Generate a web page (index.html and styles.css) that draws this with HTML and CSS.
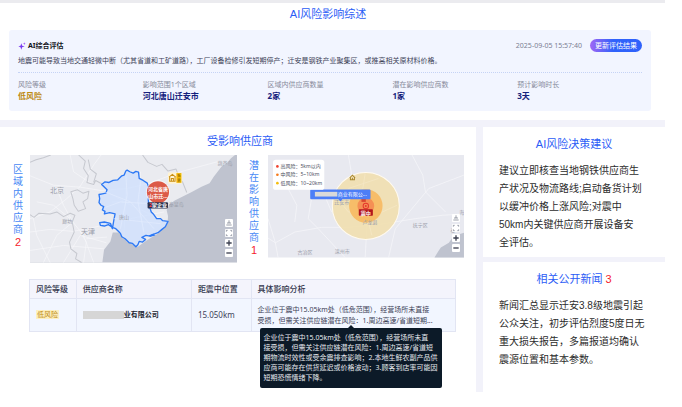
FILE: index.html
```html
<!DOCTYPE html>
<html lang="zh-CN">
<head>
	<meta charset="UTF-8">
	<title>AI风险影响综述</title>
	<link rel="stylesheet" href="styles.css">
</head>
<body>
	<div class="page">
		<section class="card overview">
			<h2 class="title">AI风险影响综述</h2>
			<div class="panel">
				<div class="panel-head">
					<svg class="spark" viewBox="0 0 24 24"><path d="M10 4 L12.5 11 L20 13 L12.5 15.500 L10 23 L7.500 15.500 L1 13 L7.500 11 Z" fill="#7a3cf0"/><path d="M19 1 L20.200 4 L23 5 L20.200 6.200 L19 9 L17.800 6.200 L15 5 L17.800 4 Z" fill="#a45cf5"/></svg>
					<h3>AI综合评估</h3>
					<span class="time">2025-09-05 15:57:40</span>
					<button type="button" class="refresh">更新评估结果</button>
				</div>
				<p class="desc">地震可能导致当地交通轻微中断（尤其省道和工矿道路），工厂设备检修引发短期停产；迁安是钢铁产业聚集区，或推高相关原材料价格。</p>
				<dl class="metrics">
					<div><dt>风险等级</dt><dd class="low">低风险</dd></div>
					<div><dt>影响范围1个区域</dt><dd>河北唐山迁安市</dd></div>
					<div><dt>区域内供应商数量</dt><dd>2家</dd></div>
					<div><dt>潜在影响供应商数</dt><dd>1家</dd></div>
					<div><dt>预计影响时长</dt><dd>3天</dd></div>
				</dl>
			</div>
		</section>

		<div class="columns">
			<section class="card suppliers">
				<h2 class="title">受影响供应商</h2>
				<div class="maps">
					<div class="side-label inner">区域内供应商<b>2</b></div>
					<!-- 区域地图 -->
					<div class="map map-area">
						<svg viewBox="0 0 618 321">
							<rect width="618" height="321" fill="#bfc3cf"/>
							<path d="M0 0H612L600 10L590 22L572 34L560 50L549 64L536 84L512 95L480 112L456 124L432 136L416 148L408 165L412 182L411 202L382 234L350 254L322 274L290 260L266 231L247 231L240 258L221 283L216 321H0Z" fill="#eaebf0"/>
							<g fill="none" stroke="#f8f8fb" stroke-width="2">
								<path d="M0 62L70 90L150 96L212 106L290 100L350 86L450 50L560 20"/>
								<path d="M0 190L60 170L110 130L148 96L190 30L212 0"/>
								<path d="M80 100L100 150L128 200L160 240L190 321M128 200L80 240L40 321"/>
								<path d="M0 230L60 222L128 228L200 214L245 200L300 190L400 170"/>
								<path d="M150 228L168 260L160 321M168 250L230 245M100 321L150 240L228 262M20 140L70 150L120 190M290 60L286 120L280 250M330 50L325 130L340 240M245 140L380 145M230 110L300 150L390 190"/>
								<path d="M0 285L100 270L220 280M60 321L20 240L8 180M120 0L130 50L190 90"/>
							</g>
							<g fill="none" stroke="#c6c8cf" stroke-width="3" stroke-linejoin="round">
								<path d="M0 22L18 14L40 8L62 0M145 0L165 18L160 40L174 62L170 82L190 88L196 76L218 88M174 14L180 42L198 56L190 82M0 178L12 186L26 174L60 176L80 170L100 184L120 174L134 180L126 200L132 230L118 260L122 280L140 294L136 310L154 321"/>
								<path d="M122 110L142 104L158 114L176 108L172 130L158 140L166 160L144 168L132 150L128 130ZM336 0L352 22L378 34L394 28L412 48L436 42L444 64L456 82L468 112"/>
							</g>
							<path d="M214 88L224 80L236 82L248 76L262 74L274 62L281 60L286 48L290 45L298 50L308 54L316 49L324 51L326 70L338 76L350 84L358 108L353 132L354 146L358 158L362 170L368 176L378 190L390 190L396 196L412 198L404 214L394 222L382 232L370 236L358 242L346 240L334 246L345 252L336 260L326 258L322 268L316 274L306 264L296 262L284 250L274 244L270 234L266 230L256 220L246 216L234 208L222 212L210 210L208 202L222 200L240 204L246 220L250 196L254 176L238 172L222 176L224 168L216 164L220 154L212 150L206 142L208 130L206 118L216 116L226 114L230 104L224 98Z" fill="#cfe0fc" fill-opacity=".8" stroke="#2d79f5" stroke-width="4" stroke-linejoin="round"/>
							<g fill="none" stroke="#e3ecfd" stroke-width="2"><path d="M226 156L270 140L350 145M286 60L290 120L270 220M330 80L322 140L340 230M250 190L390 205M224 110L300 140L370 220"/></g>
							<path d="M354 240L368 234L374 240L360 244Z" fill="#2d79f5"/>
							<g class="place">
								<text x="60" y="112">北京</text>
								<text x="152" y="235">天津</text>
								<text x="96" y="204" class="small">廊坊</text>
								<text x="266" y="191" class="small">唐山</text>
								<text x="414" y="153" class="small">秦皇岛</text>
								<text x="560" y="30" class="small">葫芦岛</text>
							</g>
							<rect x="412" y="52" width="42" height="34" rx="4" fill="#fff3d1"/>
							<path d="M415 66L425 58L435 66M417 66V78H433V66M422 78V70H428V78" fill="none" stroke="#c98d12" stroke-width="3"/>
							<rect x="437" y="54" width="15" height="29" fill="#f2b705"/>
							<text x="440" y="65" class="tiny-dark">低</text><text x="440" y="80" class="tiny-dark">震</text>
							<circle cx="382" cy="111" r="36" fill="#fff" fill-opacity=".5"/>
							<circle cx="382" cy="111" r="33" fill="#dc5a47"/>
							<text x="382" y="106" class="pin">河北省唐</text>
							<text x="382" y="128" class="pin">山市迁...</text>
							<rect x="351" y="141" width="61" height="19" rx="3" fill="#2b3350"/>
							<text x="382" y="156" class="pin"><tspan fill="#ff4b4b">2</tspan>家企业</text>
						</svg>
						<div class="controls">
							<button type="button" aria-label="定位"><svg viewBox="0 0 12 12"><path d="M6 2V6M3 6H9M2 9H10"/></svg></button>
							<button type="button" aria-label="全屏"><svg viewBox="0 0 12 12"><path d="M2 4V2H4M8 2H10V4M10 8V10H8M4 10H2V8"/></svg></button>
							<button type="button" aria-label="放大"><svg viewBox="0 0 12 12"><path class="bold" d="M6 2V10M2 6H10"/></svg></button>
							<button type="button" aria-label="缩小"><svg viewBox="0 0 12 12"><path class="bold" d="M2 6H10"/></svg></button>
						</div>
					</div>
					<div class="side-label">潜在影响供应商<b>1</b></div>
					<!-- 震中地图 -->
					<div class="map map-center">
						<svg viewBox="0 0 585 306">
							<rect width="585" height="306" fill="#e8e9f0"/>
							<path d="M497 306L508 288L516 276L540 262L554 242L585 232V306Z" fill="#bfc3cf"/>
							<g fill="none" stroke="#f7f7fa" stroke-width="2">
								<path d="M0 248L22 262L80 230L160 216L240 216L340 206L440 190L520 180L585 176"/>
								<path d="M22 262L30 306M0 190L22 262M430 0L462 60L470 110L530 170M240 0L250 60L300 130L290 306M360 306L380 220L480 100L585 60"/>
								<path d="M60 100L86 150L80 200M130 130L120 190L150 220L230 306M160 100L190 170"/>
							</g>
							<circle cx="292" cy="152" r="100" fill="#f1dfaf" fill-opacity=".9" stroke="#fffaf0" stroke-width="3"/>
							<path d="M208 130L240 170L320 180L385 150M290 55L280 120L310 240M240 100L330 70" fill="none" stroke="#f6e9c8" stroke-width="2"/>
							<circle cx="292" cy="152" r="50" fill="#f7bd69"/>
							<circle cx="292" cy="152" r="25" fill="#f58f54"/>
							<g class="place">
								<text x="198" y="147" class="small">迁安市</text>
								<text x="282" y="207" class="small">卢龙县</text>
								<text x="432" y="215" class="small">抚宁区</text>
								<text x="88" y="296" class="small">古冶区</text>
								<text x="199" y="293" class="small">滦州市</text>
								<text x="545" y="229" class="small">秦</text>
								<text x="571" y="177" class="small">海</text>
							</g>
							<path d="M244 68L252 60L260 68M246 68V74H258V68M252 74V68" fill="none" stroke="#a9872c" stroke-width="3"/>
							<rect x="279" y="130" width="13" height="10" fill="#d9482f"/>
							<circle cx="292" cy="152" r="8" fill="none" stroke="#e5372d" stroke-width="3"/>
							<circle cx="292" cy="152" r="3" fill="#e5372d"/>
							<rect x="271" y="162" width="42" height="19" rx="2" fill="#b3161d"/>
							<text x="292" y="178" class="pin">震中</text>
							<path d="M129 103H303Q306 103 306 106V129Q306 132 303 132H222L216 139L210 132H129Q126 132 126 129V106Q126 103 129 103Z" fill="#4c7ef7"/>
							<rect x="140" y="110" width="67" height="14" fill="#d9d9d9"/>
							<text x="208" y="123" class="tag">商业有限公...</text>
							<rect x="15" y="14" width="153" height="90" rx="8" fill="#fff"/>
							<circle cx="28" cy="34" r="4" fill="#f0422f"/>
							<circle cx="28" cy="59" r="4" fill="#f77a1b"/>
							<circle cx="28" cy="84" r="4" fill="#f5bd0c"/>
							<g class="legend">
								<text x="37" y="39">高风险：</text><text x="97" y="39">5km以内</text>
								<text x="37" y="64">中风险：</text><text x="97" y="64">5~10km</text>
								<text x="37" y="89">低风险：</text><text x="97" y="89">10~20km</text>
							</g>
						</svg>
						<div class="controls">
							<button type="button" aria-label="定位"><svg viewBox="0 0 12 12"><path d="M6 2V6M3 6H9M2 9H10"/></svg></button>
							<button type="button" aria-label="全屏"><svg viewBox="0 0 12 12"><path d="M2 4V2H4M8 2H10V4M10 8V10H8M4 10H2V8"/></svg></button>
							<button type="button" aria-label="放大"><svg viewBox="0 0 12 12"><path class="bold" d="M6 2V10M2 6H10"/></svg></button>
							<button type="button" aria-label="缩小"><svg viewBox="0 0 12 12"><path class="bold" d="M2 6H10"/></svg></button>
						</div>
					</div>
				</div>

				<table class="list">
					<thead>
						<tr><th class="c1">风险等级</th><th class="c2">供应商名称</th><th class="c3">距震中位置</th><th>具体影响分析</th></tr>
					</thead>
					<tbody>
						<tr>
							<td><span class="badge">低风险</span></td>
							<td><span class="company"><i class="mask"></i>业有限公司</span></td>
							<td class="distance">15.050km</td>
							<td class="analysis">
								企业位于震中15.05km处（低危范围），经营场所未直接<br>受损，但需关注供应链潜在风险：1.周边高速/省道短期...
								<div class="tooltip" role="tooltip">企业位于震中15.05km处（低危范围），经营场所未直<br>接受损，但需关注供应链潜在风险：1.周边高速/省道短<br>期物流时效性或受余震排查影响；2.本地生鲜农副产品供<br>应商可能存在供货延迟或价格波动；3.顾客到店率可能因<br>短期恐慌情绪下降。</div>
							</td>
						</tr>
					</tbody>
				</table>
			</section>

			<aside class="aside">
				<section class="card note">
					<h2 class="title">AI风险决策建议</h2>
					<p>建议立即核查当地钢铁供应商生<br>产状况及物流路线;启动备货计划<br>以缓冲价格上涨风险;对震中<br>50km内关键供应商开展设备安<br>全评估。</p>
				</section>
				<section class="card note news">
					<h2 class="title">相关公开新闻 <b>3</b></h2>
					<p>新闻汇总显示迁安3.8级地震引起<br>公众关注，初步评估烈度5度日无<br>重大损失报告，多篇报道均确认<br>震源位置和基本参数。</p>
				</section>
			</aside>
		</div>
	</div>
</body>
</html>
```

FILE: styles.css
```css
* { margin: 0; padding: 0; box-sizing: border-box; }
body { padding-right: 17px; background: #fff; font-family: "Noto Sans", "Noto Sans CJK SC", sans-serif; font-size: 7px; line-height: 10px; color: #3d4258; }
button { border: 0; font-family: inherit; cursor: pointer; }
.page { background: #f2f2fa; border-top: 3px solid #ebebef; }
.card { background: #fff; }
.title { font-family: "Liberation Sans", "Noto Sans CJK SC", sans-serif; font-size: 11px; line-height: 16px; font-weight: 400; text-align: center; color: #2b5cf6; }

/* 综述 */
.overview { padding: 3px 14px 9px 9px; }
.overview .title { padding-right: 4px; }
.panel { margin-top: 8px; padding: 9px; background: #f2f5ff; border-radius: 3px; }
.panel-head { display: flex; align-items: center; height: 13px; }
.panel-head h3 { font-size: 7px; font-weight: 700; color: #11131c; }
.spark { width: 8px; height: 8px; margin-right: 2px; }
.time { margin-left: auto; margin-right: 8px; color: #7b8093; }
.refresh { height: 13px; padding: 0 5px; border-radius: 7px; font-size: 7px; line-height: 13px; color: #fff; background: linear-gradient(90deg, #a066f5, #2f62fb 45%); }
.desc { margin-top: 4px; padding-bottom: 6px; border-bottom: 1px dotted #c5d3f5; }
.metrics { display: grid; grid-template-columns: repeat(5, 1fr); margin-top: 7px; }
.metrics dt { color: #878b9b; }
.metrics dd { font-size: 8px; line-height: 12px; font-weight: 700; color: #15217c; }
.metrics .low { color: #bd8b12; }

.columns { display: grid; grid-template-columns: 68fr 26fr; gap: 7px; margin-top: 7px; }

/* 供应商 */
.suppliers { padding: 6px 12px 0; }
.suppliers .title { padding-left: 4px; }
.maps { display: flex; margin-top: 6px; }
.side-label { flex: none; width: 12px; margin: 4px 8px 0 11px; font-size: 10px; line-height: 12px; text-align: center; color: #4789f5; }
.side-label.inner { margin: 8px 6px 0 0; }
.side-label b, .title b { font-weight: 400; color: #f5222d; }
.side-label b { display: block; margin-top: 1px; font-family: "Liberation Sans", sans-serif; font-size: 11px; }
.map { position: relative; align-self: flex-start; overflow: hidden; }
.map > svg { display: block; width: 100%; }
.map-area { flex: 206 1 0; }
.map-center { flex: 195 1 0; }
.map text { font-size: 15px; }
.map .place text { font-size: 21px; fill: #9b9eaa; }
.map .place .small { font-size: 15px; }
.map .pin { fill: #fff; font-weight: 700; text-anchor: middle; }
.map .tiny-dark { font-size: 9px; fill: #4c3800; }
.map .tag { fill: #fff; }
.map .legend { fill: #4a4e5e; }
.controls { position: absolute; right: 4px; bottom: 6px; display: flex; flex-direction: column; gap: 2px; }
.controls button { display: block; width: 8px; height: 8px; background: #fff; border-radius: 1px; }
.controls svg { display: block; width: 8px; height: 8px; fill: none; stroke: #6a6f80; stroke-width: 1; }
.controls .bold { stroke: #3c4050; stroke-width: 2; }

.list { width: calc(100% - 25px); margin: 16px 0 0 17px; border-collapse: collapse; table-layout: fixed; background: #f2f6ff; }
.list th, .list td { border: 1px solid #e2e5f3; padding: 4px 6px; text-align: left; white-space: nowrap; }
.list th { background: #f4f4fc; font-size: 8px; font-weight: 500; color: #33374c; }
.list td { padding: 5px 6px; line-height: 11px; }
.c1 { width: 11%; }
.c2 { width: 27%; }
.c3 { width: 14%; }
.badge { padding: 0 1px; background: #fdf0c0; color: #c08d14; }
.company { display: flex; align-items: center; font-weight: 700; color: #22252f; }
.mask { width: 41px; height: 8px; background: #d6d6d6; }
.list .distance { font-size: 8px; }
.list .analysis { position: relative; }
.tooltip { position: absolute; z-index: 2; left: 8px; top: 29px; width: 182px; padding: 5px 4px; border-radius: 2px; background: #0c1a28; color: #e6e9ee; line-height: 10px; }
.tooltip::before { content: ""; position: absolute; left: 50%; top: -3px; margin-left: -3px; border: 3px solid transparent; border-top: 0; border-bottom-color: #0c1a28; }

/* 右侧 */
.aside { display: flex; flex-direction: column; gap: 5px; }
.note { padding: 9px 16px 5px; }
.note p { margin-top: 10px; font-family: "Liberation Sans", "Noto Sans CJK SC", sans-serif; font-size: 10px; line-height: 18px; white-space: nowrap; color: #2c2c2c; }
.news { padding-bottom: 23px; }
```
